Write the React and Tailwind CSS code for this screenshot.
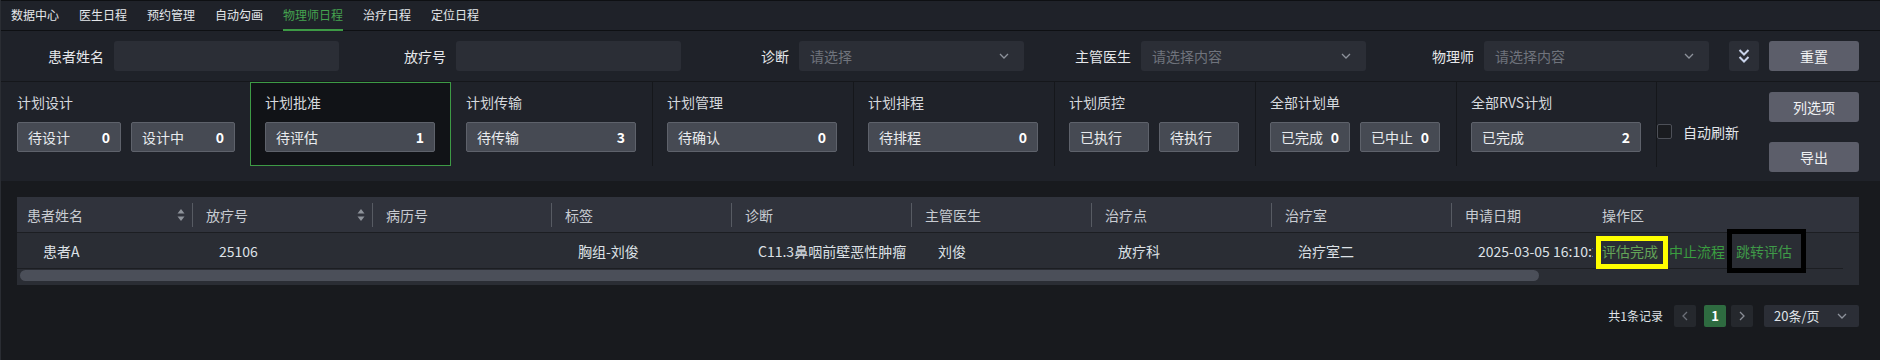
import React from 'react';

const tabs = ['数据中心', '医生日程', '预约管理', '自动勾画', '物理师日程', '治疗日程', '定位日程'];

const filters = [
    { label: '患者姓名', w: 'w-[113px]' },
    { label: '放疗号', w: 'w-[117px]' },
    { label: '诊断', w: 'w-[118px]', placeholder: '请选择' },
    { label: '主管医生', w: 'w-[117px]', placeholder: '请选择内容' },
    { label: '物理师', w: 'w-[118px]', placeholder: '请选择内容' },
];

const groups = [
    { title: '计划设计', cls: 'w-[249px] pl-[16px] pt-[10px]', items: [{ l: '待设计', n: 0, w: 'w-[104px]' }, { l: '设计中', n: 0, w: 'w-[104px]' }] },
    { title: '计划批准', cls: 'w-[201px] pl-[14px] pt-[9px] border border-[#3d9a45] bg-[#111317]', items: [{ l: '待评估', n: 1, w: 'w-[170px]' }] },
    { title: '计划传输', cls: 'w-[201px] pl-[15px] pt-[10px]', items: [{ l: '待传输', n: 3, w: 'w-[170px]' }] },
    { title: '计划管理', cls: 'w-[201px] pl-[14px] pt-[10px] border-l border-[#15171b]', items: [{ l: '待确认', n: 0, w: 'w-[170px]' }] },
    { title: '计划排程', cls: 'w-[201px] pl-[14px] pt-[10px] border-l border-[#15171b]', items: [{ l: '待排程', n: 0, w: 'w-[170px]' }] },
    { title: '计划质控', cls: 'w-[201px] pl-[14px] pt-[10px] border-l border-[#15171b]', items: [{ l: '已执行', w: 'w-[80px]' }, { l: '待执行', w: 'w-[80px]' }] },
    { title: '全部计划单', cls: 'w-[201px] pl-[14px] pt-[10px] border-l border-[#15171b]', items: [{ l: '已完成', n: 0, w: 'w-[80px]' }, { l: '已中止', n: 0, w: 'w-[80px]' }] },
    { title: '全部RVS计划', cls: 'w-[200px] pl-[14px] pt-[10px] border-l border-[#15171b]', items: [{ l: '已完成', n: 2, w: 'w-[170px]' }] },
];

const cols = [
    { h: '患者姓名', w: 'w-[176px]', hp: 'pl-[10px]', sort: true, div: true, v: '患者A' },
    { h: '放疗号', w: 'w-[180px]', hp: 'pl-[13px]', sort: true, div: true, v: '25106' },
    { h: '病历号', w: 'w-[179px]', hp: 'pl-[13px]', div: true, v: '' },
    { h: '标签', w: 'w-[180px]', hp: 'pl-[13px]', div: true, v: '胸组-刘俊' },
    { h: '诊断', w: 'w-[180px]', hp: 'pl-[13px]', div: true, v: 'C11.3鼻咽前壁恶性肿瘤' },
    { h: '主管医生', w: 'w-[180px]', hp: 'pl-[13px]', div: true, v: '刘俊' },
    { h: '治疗点', w: 'w-[180px]', hp: 'pl-[13px]', div: true, v: '放疗科' },
    { h: '治疗室', w: 'w-[180px]', hp: 'pl-[13px]', div: true, v: '治疗室二' },
    { h: '申请日期', w: 'w-[141px]', hp: 'pl-[13px]', v: '2025-03-05 16:10:28' },
];

function Chevron({ className = '' }) {
    return (
        <svg width="10" height="6" viewBox="0 0 10 6" className={className}>
            <polyline points="1,1 5,5 9,1" fill="none" stroke="#8d929b" strokeWidth="1.3" />
        </svg>
    );
}

function SortIcon() {
    return (
        <svg width="8" height="14" viewBox="0 0 8 14">
            <path d="M4 1 L7.5 5.5 L0.5 5.5 Z" fill="#8e939b" />
            <path d="M4 13 L7.5 8.5 L0.5 8.5 Z" fill="#8e939b" />
        </svg>
    );
}

export default function App() {
    return (
        <div className="w-[1880px] h-[360px] overflow-hidden bg-[#181a1e] border-l border-[#2a2d33] font-['Noto_Sans_CJK_SC',sans-serif] text-[14px] leading-[20px]">
            {/* Tabs */}
            <div className="h-[31px] flex bg-[#1f2229] border-t border-[#0e1013] shadow-[inset_0_-1px_0_#0e1013]">
                {tabs.map((t, i) => (
                    <div
                        key={t}
                        className={i === 4
                            ? 'mx-[10px] pt-[6px] text-[12px] leading-[16px] border-b-2 border-[#3d9a45] text-[#45a350]'
                            : 'mx-[10px] pt-[6px] text-[12px] leading-[16px] border-b-2 border-transparent text-[#e4e7eb]'}
                    >
                        {t}
                    </div>
                ))}
            </div>

            {/* Filters */}
            <div className="h-[51px] flex items-center bg-[#1f2229] border-b border-[#15171b]">
                {filters.map((f) => (
                    <div key={f.label} className="flex items-center">
                        <div className={`${f.w} text-right pr-[10px] text-[#e6e8eb]`}>{f.label}</div>
                        <div className="w-[225px] h-[30px] rounded-[3px] bg-[#2b2e36] flex items-center pl-[11px] pr-[15px]">
                            {f.placeholder && (
                                <>
                                    <span className="flex-1 text-[#6f737c]">{f.placeholder}</span>
                                    <Chevron />
                                </>
                            )}
                        </div>
                    </div>
                ))}
                <div className="ml-[20px] w-[30px] h-[30px] rounded-[3px] bg-[#2b2e36] flex items-center justify-center">
                    <svg width="12" height="16" viewBox="0 0 12 16">
                        <polyline points="1.5,2 6,6.5 10.5,2" fill="none" stroke="#c9d3ea" strokeWidth="2" />
                        <polyline points="1.5,9 6,13.5 10.5,9" fill="none" stroke="#c9d3ea" strokeWidth="2" />
                    </svg>
                </div>
                <button className="ml-[10px] w-[90px] h-[30px] rounded-[3px] bg-[#5c5e6a] text-[#f0f1f3]">重置</button>
            </div>

            {/* Stats */}
            <div className="h-[99px] flex bg-[#1f2229]">
                {groups.map((g) => (
                    <div key={g.title} className={`${g.cls} h-[84px] self-start`}>
                        <div className="text-[#d6d9de]">{g.title}</div>
                        <div className="mt-[10px] flex gap-[10px]">
                            {g.items.map((it, i) => (
                                <div key={i} className={`${it.w} h-[30px] px-[10px] flex items-center justify-between rounded-[2px] bg-[#464a53] border border-[#5e626b] text-[#e9ebee]`}>
                                    <span>{it.l}</span>
                                    {it.n !== undefined && <span className="font-bold text-white">{it.n}</span>}
                                </div>
                            ))}
                        </div>
                    </div>
                ))}
                <div className="w-px h-[85px] bg-[#15171b]" />
                <div className="flex items-center">
                    <div className="w-[15px] h-[15px] rounded-[2px] bg-[#1a1c20] border border-[#4d5058]" />
                    <span className="ml-[11px] text-[#e3e6ea]">自动刷新</span>
                </div>
                <div className="ml-auto mr-[21px] flex flex-col justify-center gap-[20px]">
                    <button className="w-[90px] h-[30px] rounded-[3px] bg-[#5c5e6a] text-[#f0f1f3]">列选项</button>
                    <button className="w-[90px] h-[30px] rounded-[3px] bg-[#5c5e6a] text-[#f0f1f3]">导出</button>
                </div>
            </div>

            {/* Table */}
            <div className="pt-[16px] pl-[16px]">
                <div className="w-[1842px] bg-[#2a2d34]">
                    <div className="h-[36px] flex bg-[#30333c] border-b border-[#1c1e22] text-[#c8ccd2]">
                        {cols.map((c) => (
                            <div key={c.h} className={`${c.w} ${c.hp} flex items-center`}>
                                <span>{c.h}</span>
                                <span className="flex-1" />
                                {c.sort && <span className="mr-[7px] flex"><SortIcon /></span>}
                                {c.div && <span className="w-px h-[24px] bg-[#575b63]" />}
                            </div>
                        ))}
                        <div className="flex-1 pl-[9px] flex items-center">操作区</div>
                    </div>
                    <div className="flex">
                        <div className="w-[1826px] h-[36px] flex border-b border-[#1c1e22] text-[#dde1e6]">
                            {cols.map((c) => (
                                <div key={c.h} className={`${c.w} pl-[26px] flex items-center overflow-hidden whitespace-nowrap`}>
                                    {c.v}
                                </div>
                            ))}
                            <div className="relative flex-1 pl-[9px] flex items-center gap-[11px]">
                                <span className="text-[#63a458]">评估完成</span>
                                <span className="text-[#3a9d40]">中止流程</span>
                                <span className="text-[#3f9a48]">跳转评估</span>
                                <div className="absolute left-[3px] top-[3px] w-[72px] h-[33px] border-[5px] border-[#ffff00]" />
                                <div className="absolute left-[134px] top-[-4px] w-[79px] h-[44px] border-[5px] border-black" />
                            </div>
                        </div>
                    </div>
                    <div className="h-[16px] pt-[1px] pl-[3px]">
                        <div className="w-[1519px] h-[11px] rounded-full bg-[#4b4f59]" />
                    </div>
                </div>

                {/* Pagination */}
                <div className="mt-[20px] w-[1842px] h-[22px] flex items-center justify-end text-[#dfe2e6]">
                    <span className="text-[12px]">共1条记录</span>
                    <div className="ml-[11px] w-[22px] h-[22px] rounded-[2px] bg-[#25282d] flex items-center justify-center">
                        <svg width="6" height="10" viewBox="0 0 6 10">
                            <polyline points="5,1 1,5 5,9" fill="none" stroke="#6b6f77" strokeWidth="1.3" />
                        </svg>
                    </div>
                    <div className="ml-[8px] w-[22px] h-[22px] rounded-[2px] bg-[#2e6b40] flex items-center justify-center text-[13px] font-bold text-white">1</div>
                    <div className="ml-[5px] w-[22px] h-[22px] rounded-[2px] bg-[#25282d] flex items-center justify-center">
                        <svg width="6" height="10" viewBox="0 0 6 10">
                            <polyline points="1,1 5,5 1,9" fill="none" stroke="#8a8e96" strokeWidth="1.3" />
                        </svg>
                    </div>
                    <div className="ml-[11px] w-[95px] h-[22px] rounded-[2px] bg-[#2b2e36] flex items-center pl-[10px] pr-[12px]">
                        <span className="flex-1 text-[13px]">20条/页</span>
                        <Chevron />
                    </div>
                </div>
            </div>
        </div>
    );
}
